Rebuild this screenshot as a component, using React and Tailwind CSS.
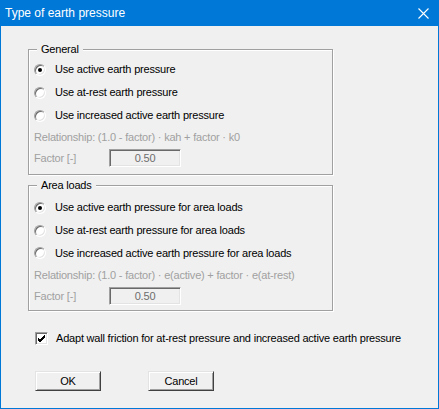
import React, { useState } from 'react';

// Classic 3D radio button
function Radio({ checked }) {
  return (
    <span className="relative inline-block w-[12px] h-[12px] shrink-0 rounded-full bg-white border border-t-[#a0a0a0] border-l-[#a0a0a0] border-b-white border-r-white shadow-[inset_1px_1px_0_#696969,inset_-1px_-1px_0_#e3e3e3]">
      {checked && (
        <span className="absolute left-1/2 top-1/2 w-[4px] h-[4px] -ml-[2px] -mt-[2px] rounded-full bg-black" />
      )}
    </span>
  );
}

function Checkbox({ checked }) {
  return (
    <span className="inline-flex items-center justify-center w-[13px] h-[13px] shrink-0 bg-white border border-t-[#a0a0a0] border-l-[#a0a0a0] border-b-white border-r-white shadow-[inset_1px_1px_0_#696969,inset_-1px_-1px_0_#e3e3e3]">
      {checked && (
        <svg width="9" height="9" viewBox="0 0 9 9">
          <path d="M1 4 L3 6 L8 1 M1 5 L3 7 L8 2 M1 6 L3 8 L8 3" stroke="black" strokeWidth="1" fill="none" shapeRendering="crispEdges" />
        </svg>
      )}
    </span>
  );
}

function GroupBox({ title, children, className }) {
  return (
    <div className={`relative w-[305px] h-[126px] border border-[#a0a0a0] shadow-[inset_1px_1px_0_white,1px_1px_0_white] ${className}`}>
      <span className="absolute -top-[8px] left-[8px] bg-[#f0f0f0] px-[4px] leading-[14px]">{title}</span>
      {children}
    </div>
  );
}

function RadioRow({ label, checked, h, onClick }) {
  return (
    <div className={`flex items-center pl-[5px] ${h}`} onClick={onClick}>
      <Radio checked={checked} />
      <span className="ml-[9px]">{label}</span>
    </div>
  );
}

function FactorField({ value }) {
  return (
    <div className="ml-[75px] w-[72px] h-[18px] flex items-center justify-center text-[#6d6d6d] bg-[#f0f0f0] border border-t-[#a0a0a0] border-l-[#a0a0a0] border-b-white border-r-white shadow-[inset_1px_1px_0_#696969,inset_-1px_-1px_0_#e3e3e3]">
      {value}
    </div>
  );
}

function Button({ children }) {
  return (
    <button className="w-[66px] h-[20px] flex items-center justify-center bg-[#f0f0f0] border border-t-[#e3e3e3] border-l-[#e3e3e3] border-b-[#404040] border-r-[#404040] shadow-[inset_1px_1px_0_white,inset_-1px_-1px_0_#a0a0a0]">
      {children}
    </button>
  );
}

export default function App() {
  const [general, setGeneral] = useState(0);
  const [area, setArea] = useState(0);

  return (
    <div
      className="w-[439px] h-[409px] flex flex-col bg-[#f0f0f0] border-x border-b border-[#0078d7] text-[11px] tracking-[-0.2px] text-black"
      style={{ fontFamily: '"Liberation Sans", Arial, sans-serif' }}
    >
      {/* Title bar */}
      <div className="h-[26px] shrink-0 -mx-px bg-[#0078d7] flex items-center justify-between pl-[5px] pr-[10px] text-white">
        <span className="text-[12px] tracking-normal">Type of earth pressure</span>
        <svg width="11" height="11" viewBox="0 0 11 11">
          <path d="M0.5 0.5 L10.5 10.5 M10.5 0.5 L0.5 10.5" stroke="white" strokeWidth="1.1" />
        </svg>
      </div>

      <div className="flex flex-col pl-[27px] pt-[23px]">
        {/* General */}
        <GroupBox title="General">
          <div className="flex flex-col pt-[8px]">
            <RadioRow label="Use active earth pressure" checked={general === 0} h="h-[23px]" onClick={() => setGeneral(0)} />
            <RadioRow label="Use at-rest earth pressure" checked={general === 1} h="h-[23px]" onClick={() => setGeneral(1)} />
            <RadioRow label="Use increased active earth pressure" checked={general === 2} h="h-[23px]" onClick={() => setGeneral(2)} />
            <div className="h-[21px] flex items-center pl-[5px] text-[#a0a0a0]">
              Relationship: (1.0 - factor) · kah + factor · k0
            </div>
            <div className="h-[20px] flex items-center pl-[5px]">
              <span className="w-0 whitespace-nowrap text-[#a0a0a0]">Factor [-]</span>
              <FactorField value="0.50" />
            </div>
          </div>
        </GroupBox>

        {/* Area loads */}
        <GroupBox title="Area loads" className="mt-[10px]">
          <div className="flex flex-col pt-[10px]">
            <RadioRow label="Use active earth pressure for area loads" checked={area === 0} h="h-[23px]" onClick={() => setArea(0)} />
            <RadioRow label="Use at-rest earth pressure for area loads" checked={area === 1} h="h-[23px]" onClick={() => setArea(1)} />
            <RadioRow label="Use increased active earth pressure for area loads" checked={area === 2} h="h-[22px]" onClick={() => setArea(2)} />
            <div className="h-[22px] flex items-center pl-[5px] text-[#a0a0a0]">
              Relationship: (1.0 - factor) · e(active) + factor · e(at-rest)
            </div>
            <div className="h-[20px] flex items-center pl-[5px]">
              <span className="w-0 whitespace-nowrap text-[#a0a0a0]">Factor [-]</span>
              <FactorField value="0.50" />
            </div>
          </div>
        </GroupBox>

        {/* Wall friction */}
        <div className="mt-[20px] h-[14px] flex items-center pl-[7px]">
          <Checkbox checked />
          <span className="ml-[8px]">Adapt wall friction for at-rest pressure and increased active earth pressure</span>
        </div>

        {/* Buttons */}
        <div className="mt-[26px] flex gap-[47px] pl-[7px]">
          <Button>OK</Button>
          <Button>Cancel</Button>
        </div>
      </div>
    </div>
  );
}
